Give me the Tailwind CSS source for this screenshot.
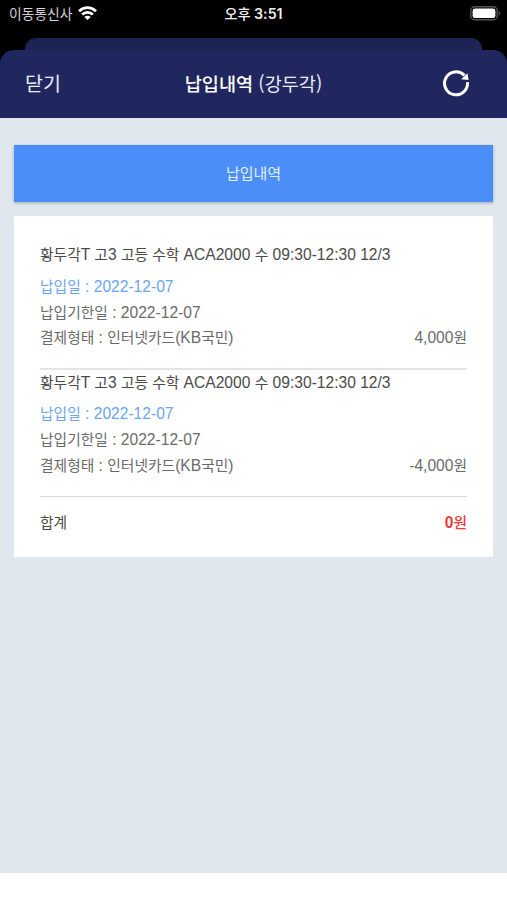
<!DOCTYPE html>
<html lang="ko">
<head>
<meta charset="utf-8">
<title>납입내역</title>
<script src="https://cdn.jsdelivr.net/npm/@tailwindcss/browser@4"></script>
</head>
<body class="w-[507px] h-[900px] overflow-hidden bg-white font-['Liberation_Sans','Noto_Sans_CJK_KR',sans-serif]">
<div class="bg-black">
  <div class="h-[38px] px-[8px] pt-[3px] grid grid-cols-3 items-start text-white">
    <div class="flex items-center h-[20px] gap-[6px] pl-px">
      <span class="font-['Noto_Sans_CJK_KR',sans-serif] text-[13.8px] leading-[20px] whitespace-nowrap text-[#d4d4d4]">이동통신사</span>
      <svg class="w-[19px] h-[14px] shrink-0" viewBox="0 0 19 14" fill="none" stroke="#fff" stroke-width="2.7">
        <path d="M1 5.2C5.8.5 13.2.5 18 5.2"/>
        <path d="M4.1 8.5C7.2 5.6 11.8 5.6 14.9 8.5"/>
        <path d="M6.3 11C8.2 9.3 10.8 9.3 12.7 11L9.5 14Z" fill="#fff" stroke="none"/>
      </svg>
    </div>
    <div class="text-center whitespace-nowrap font-['Inter','Noto_Sans_CJK_KR',sans-serif] font-semibold text-[14.2px] leading-[21px] text-[#eee]"><span class="font-medium">오후</span> 3:51</div>
    <div class="flex justify-end items-center h-[20px] -mr-[2px]">
      <svg class="w-[31px] h-[15px]" viewBox="0 0 31 15">
        <rect x=".8" y=".8" width="26.4" height="13" rx="4" fill="none" stroke="#555" stroke-width="1.4"/>
        <rect x="2.6" y="2.5" width="22.8" height="9.6" rx="2.4" fill="#fff"/>
        <path d="M28.6 5v4.6q1.6-.8 1.6-2.3t-1.6-2.3Z" fill="#555"/>
      </svg>
    </div>
  </div>
  <div class="mx-[25px] h-[12px] rounded-t-[11px] bg-[#1c2453]"></div>
  <header class="h-[68px] px-[25px] pb-[2px] rounded-t-[14px] bg-[#20275f] grid grid-cols-3 items-center text-[#e8edfa] font-['Noto_Sans_CJK_KR',sans-serif]">
    <div class="text-[19.5px] leading-[28px]">닫기</div>
    <h1 class="text-[18.6px] leading-[28px] text-center whitespace-nowrap"><span class="font-medium text-white">납입내역</span> (강두각)</h1>
    <div class="flex justify-end pr-[11px]">
      <svg class="w-[30px] h-[30px]" viewBox="0 0 30 30" fill="none">
        <path d="M23.4 7.4A11.5 11.5 0 1 0 26.5 14.2" stroke="#fff" stroke-width="3"/>
        <path d="M26.4 5.2L27.6 11.9L20.2 11.2Z" fill="#fff"/>
      </svg>
    </div>
  </header>
</div>
<main class="h-[755px] bg-[#e1e7ee] pt-[27px] px-[14px]">
  <div class="h-[57px] pb-[2px] bg-[#4b8ef7] shadow-[0_1px_3px_rgba(0,60,70,0.35)] flex items-center justify-center font-['Noto_Sans_CJK_KR',sans-serif] text-[15px] leading-[22px] text-[#e3efff]">납입내역</div>
  <section class="mt-[14px] h-[341px] bg-white px-[26px] pt-[26px] text-[15.6px] leading-[26px] text-[#6b6b6b] whitespace-nowrap">
    <article class="h-[128px] border-b-2 border-[#e4e5e6]">
      <h2 class="text-[#4a4a4a] mb-[6px]"><span class="text-[14.75px]">황두각</span>T <span class="text-[14.75px]">고</span>3 <span class="text-[14.75px]">고등 수학</span> ACA2000 <span class="text-[14.75px]">수</span> 09:30-12:30 12/3</h2>
      <p class="h-[26px] text-[#6ba5f5]"><span class="text-[14.75px]">납입일</span> : 2022-12-07</p>
      <p class="h-[25px]"><span class="text-[14.75px]">납입기한일</span> : 2022-12-07</p>
      <p class="h-[26px] flex justify-between"><span><span class="text-[14.75px]">결제형태</span> : <span class="text-[14.75px]">인터넷카드</span>(KB<span class="text-[14.75px]">국민</span>)</span><span>4,000<span class="text-[14.75px]">원</span></span></p>
    </article>
    <article class="h-[127px] border-b border-[#d5d8dc]">
      <h2 class="text-[#4a4a4a] mb-[5px]"><span class="text-[14.75px]">황두각</span>T <span class="text-[14.75px]">고</span>3 <span class="text-[14.75px]">고등 수학</span> ACA2000 <span class="text-[14.75px]">수</span> 09:30-12:30 12/3</h2>
      <p class="h-[26px] text-[#6ba5f5]"><span class="text-[14.75px]">납입일</span> : 2022-12-07</p>
      <p class="h-[26px]"><span class="text-[14.75px]">납입기한일</span> : 2022-12-07</p>
      <p class="h-[26px] flex justify-between"><span><span class="text-[14.75px]">결제형태</span> : <span class="text-[14.75px]">인터넷카드</span>(KB<span class="text-[14.75px]">국민</span>)</span><span>-4,000<span class="text-[14.75px]">원</span></span></p>
    </article>
    <div class="flex justify-between pt-[13px] text-[#4a4a4a]"><span class="text-[14.75px]">합계</span><span class="text-[#f03a3a] font-bold">0<span class="text-[14.75px] font-medium">원</span></span></div>
  </section>
</main>
</body>
</html>
